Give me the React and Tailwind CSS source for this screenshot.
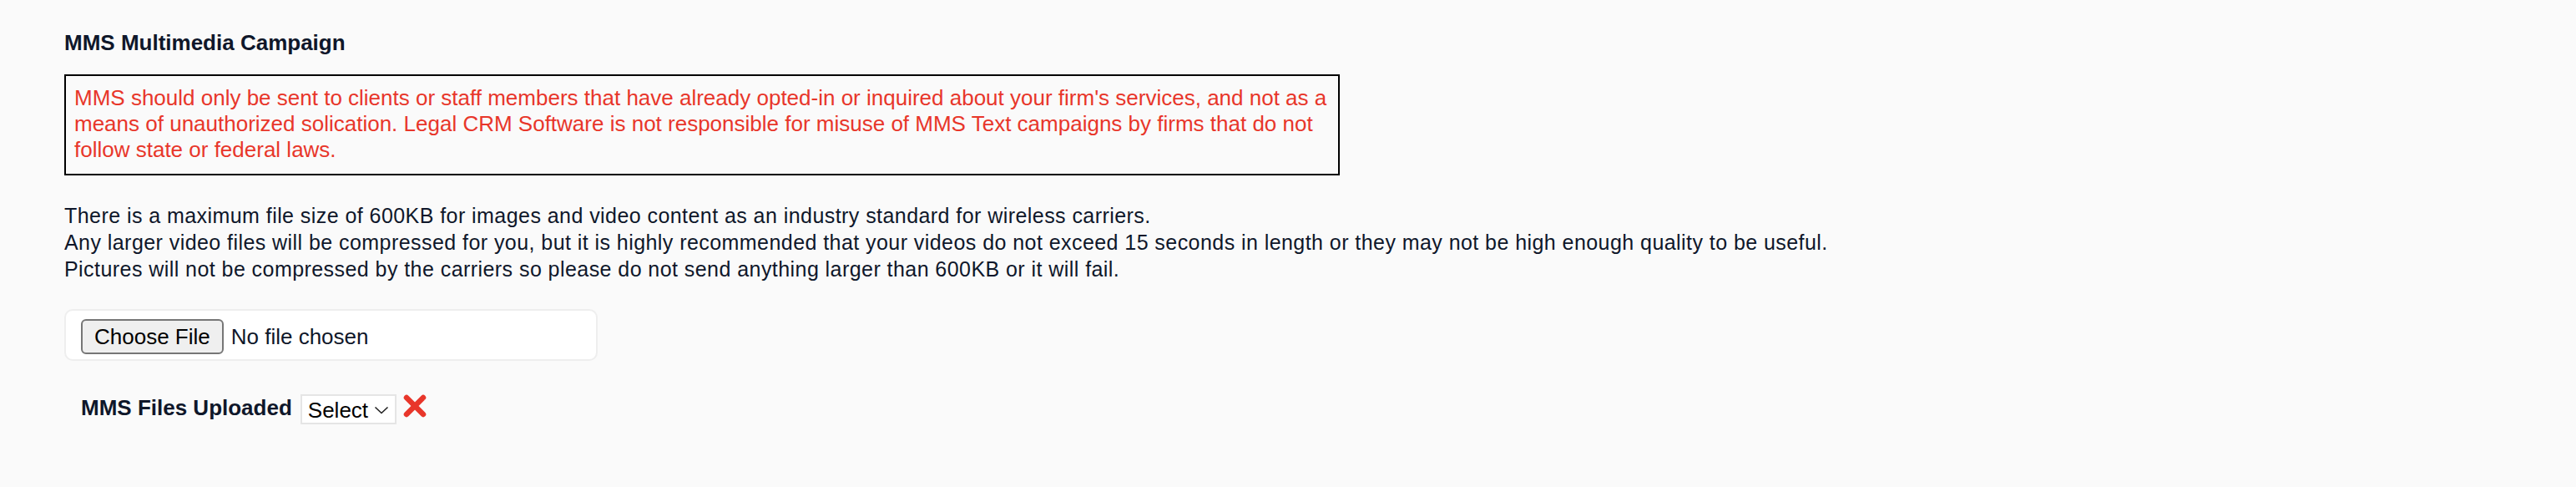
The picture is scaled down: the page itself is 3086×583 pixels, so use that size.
export default function App() {
  return (
    <div className="min-h-screen bg-[#fafafa] pt-[36px] pl-[77px] font-['Liberation_Sans',Arial,sans-serif] text-[#0f172a]">
      <h2 className="text-[26px] leading-[30px] font-bold">MMS Multimedia Campaign</h2>

      <div className="mt-[23px] w-[1528px] border-2 border-black pt-[11px] pb-[13px] px-[10px] text-[26px] leading-[31px] text-[#e8362a] whitespace-nowrap">
        MMS should only be sent to clients or staff members that have already opted-in or inquired about your firm's services, and not as a
        <br />
        means of unauthorized solication. Legal CRM Software is not responsible for misuse of MMS Text campaigns by firms that do not
        <br />
        follow state or federal laws.
      </div>

      <div className="mt-[32px] text-[25px] leading-[32px] tracking-[0.44px] whitespace-nowrap">
        <div>There is a maximum file size of 600KB for images and video content as an industry standard for wireless carriers.</div>
        <div>Any larger video files will be compressed for you, but it is highly recommended that your videos do not exceed 15 seconds in length or they may not be high enough quality to be useful.</div>
        <div>Pictures will not be compressed by the carriers so please do not send anything larger than 600KB or it will fail.</div>
      </div>

      <div className="mt-[32px] w-[639px] h-[62px] border-2 border-[#eeeeee] rounded-[10px] bg-white pl-[18px] pt-[10px] flex items-start gap-[9px]">
        <button className="h-[42px] px-[14px] border-2 border-[#767676] rounded-[6px] bg-[#efefef] text-[26px] leading-[26px] text-black">
          Choose File
        </button>
        <span className="text-[26px] leading-[42px]">No file chosen</span>
      </div>

      <div className="mt-[40px] ml-[20px] flex items-start">
        <span className="mt-[1px] text-[26px] leading-[30px] font-bold">MMS Files Uploaded</span>
        <div className="ml-[10px] w-[115px] h-[36px] border-2 border-[#e5e5e5] bg-white pl-[7px] pr-[7px] pt-[2px] flex items-start justify-between">
          <span className="text-[26px] leading-[30px] text-black">Select</span>
          <svg className="mt-[10px]" width="18" height="10" viewBox="0 0 18 10" fill="none">
            <polyline points="1.5,1.5 9,8.5 16.5,1.5" stroke="#222" strokeWidth="1.6" />
          </svg>
        </div>
        <svg className="ml-[8px]" width="28" height="28" viewBox="0 0 28 28">
          <line x1="4" y1="4" x2="24" y2="24" stroke="#e8362a" strokeWidth="6.5" strokeLinecap="round" />
          <line x1="24" y1="4" x2="4" y2="24" stroke="#e8362a" strokeWidth="6.5" strokeLinecap="round" />
        </svg>
      </div>
    </div>
  );
}
